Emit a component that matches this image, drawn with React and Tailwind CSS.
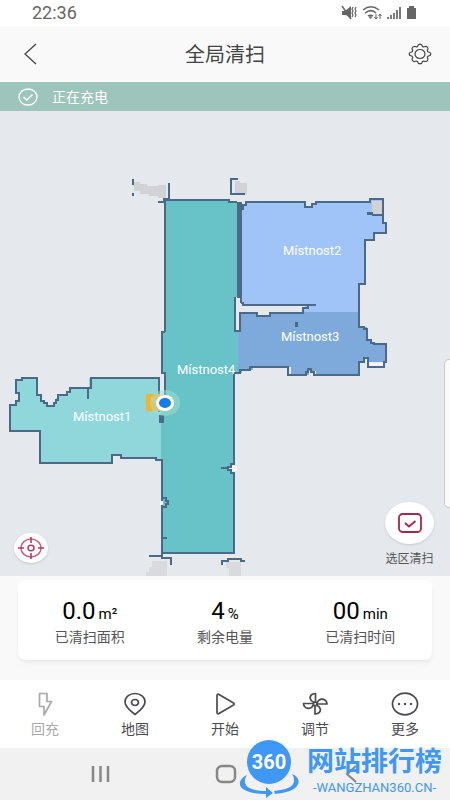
const WALL = "#4a6a87";

function StatusBar() {
  return (
    <div className="flex h-[26px] items-center justify-between bg-white px-8 text-[#666]">
      <span className="text-[18px] leading-[26px]">22:36</span>
      <svg className="h-4 w-[78px]" viewBox="342 5 78 16" fill="none" stroke="#666" aria-hidden="true">
        <g transform="translate(2 0)">
          <path d="M342 11h3l6-5v13l-5-4h-4z" fill="#666" stroke="none" />
          <path d="M342 6l9 13" stroke="#666" strokeWidth="1.5" />
          <path d="M353 7l-1 2 1 2-1 2 1 2-1 2M356 7l-1 2 1 2-1 2 1 2-1 2" strokeWidth="1.2" />
          <path d="M363 10c5-4 11-4 16 0M365 13c4-3 8-3 11 0M368 16c2-1 3-1 5 0" strokeWidth="1.5" />
          <circle cx="370.500" cy="17.500" r="1.200" fill="#666" stroke="none" />
          <path d="M376 14v5m-1.500-2l1.500 2 1.500-2M380 19v-5m-1.500 2l1.500-2 1.500 2" strokeWidth="1" />
          <path d="M388 19v-2M391 19v-4M394 19v-6M397 19v-9M400 19V7" strokeWidth="1.700" />
          <path d="M407 8h2V6h5v2h2v11h-9z" fill="#666" stroke="none" />
        </g>
      </svg>
    </div>
  );
}

function Header() {
  return (
    <header className="flex h-14 items-center justify-between bg-[#f9f9f9] px-[18px]">
      <button type="button" aria-label="返回" className="flex w-6 justify-center">
        <svg className="h-6 w-6" viewBox="0 0 24 24" fill="none" stroke="#444" strokeWidth="1.3">
          <path d="M18 2L7 12l11 10" />
        </svg>
      </button>
      <h1 className="pt-[2px] text-[20px] leading-7 text-[#444]">全局清扫</h1>
      <button type="button" aria-label="设置" className="flex w-6 justify-center">
        <svg className="h-6 w-6" viewBox="0 0 24 24" fill="none" stroke="#444" strokeWidth="1.2" strokeLinejoin="round">
          <path d="M9.500 4.400Q10 2.200 12 2.200T14.500 4.400Q15.300 5 16.300 4.700Q18.300 4 19.500 5.300T19.300 8.300Q19.200 9.300 20.200 10Q22.800 10.400 22.800 12T20.200 14Q19.200 14.700 19.300 15.700Q20.600 17.500 19.500 18.700T16.300 19.300Q15.300 19 14.500 19.600Q14 21.800 12 21.800T9.500 19.600Q8.700 19 7.700 19.300Q5.700 20 4.500 18.700T4.700 15.700Q4.800 14.700 3.800 14Q1.200 13.600 1.200 12T3.800 10Q4.800 9.300 4.700 8.300Q3.400 6.500 4.500 5.300T7.700 4.700Q8.700 5 9.500 4.400Z" />
          <ellipse cx="12" cy="12" rx="5" ry="4.500" />
        </svg>
      </button>
    </header>
  );
}

function Banner() {
  return (
    <div role="status" className="flex h-[29px] items-center gap-[14px] bg-[#9dc5bb] px-[18px] text-white">
      <svg className="h-5 w-5" viewBox="0 0 20 20" fill="none" stroke="currentColor" strokeWidth="1.3" aria-hidden="true">
        <ellipse cx="10" cy="10" rx="9" ry="8" />
        <path d="M5.500 10l3.300 3 5.700-5.500" strokeWidth="1.500" />
      </svg>
      <span className="text-[14px] leading-5">正在充电</span>
    </div>
  );
}

function FloorMap() {
  return (
    <svg className="block w-full" viewBox="0 111 450 465" role="img" aria-label="地图">
      <g fill="#d0d2d5" shapeRendering="crispEdges">
        <path d="M134 182h6v2h7v2h11v-1h8v13h-8v-2h-9v-2h-9v-3h-6z" />
        <path d="M235 181h5v2h7v11h-12z" />
        <path d="M152 561h15v15h-21v-4h3v-5h3z" fill="#d9dadd" />
        <path d="M226 562h15v14h-12v-8h-3z" fill="#d9dadd" />
      </g>

      <g shapeRendering="crispEdges">
        <path fill="#8fd7da" d="M22 378h15v17h3v6l5 2 2 3h5l4-7 2-5h11v-6h20v-10h71v20h3v62h-6v-2h-35v-3h-9v8H40v-32H10v-25h6v-4h3v-8h-3v-13h6z" />
        <path fill="#67c3c8" d="M165 200h64v2h8v95h-2v34h3v42h-4v91l-6 4 6 5v80h-73V395h4v-22h-3v-41h3z" />
        <path fill="#a1c4f8" d="M241 208l5-3v-3h59v5h7v-3h4v-2h54v-2h13v22h2v11h-11v7h-9v44h-6v28h-56v-5l8-2h-68l-2-2z" />
        <path fill="#7eaadb" d="M240 313h17v3h13v-3h33v-1h57v15h7v13h5v4h14v18h-18v-4h-4v4h-4v13h-44v-4h-7v4h-18v-8h-38v3h-11v3h-4v-42h2z" />
        <path fill="#d0d2d5" d="M372 201h10v13h-10z" />
        <path fill="#f4f5f6" d="M369 363h14v3h-14z" />
      </g>

      <g fill="none" stroke={WALL} strokeWidth="2.500" shapeRendering="crispEdges">
        <path d="M133 179v6M133 193v3M158 202h6v-3h5v-16M238 179h-7v15h14" />
        <path d="M165 332V200h64v2h8" />
        <path d="M165 332h-3v41h3v22" />
        <path d="M239 202v96" strokeWidth="5" />
        <path d="M241 303V209h2v-4h3v-3h59v5h7v-3h4v-2h54v-3h13v16h-11" />
        <path d="M383 215V223H386V233H374V240H365V284H359V327H364V329H367V340H371V343H374V344H386V362H384V367H368V358H364V362H359V375H314V372H311V369H308V372H306V375H288V367H250V370H240V373H234V464H231V467H228V470H231V473H234V553H162" />
        <path d="M162 555v3h9v7" />
        <path d="M241 303h2v2h73h-8v3h-5v5h-33v3h-13v-3h-17v18h-5v-34" />
        <path d="M367 213h6M296.500 322v5" strokeWidth="3" />
        <path d="M221 468h8" />
        <path d="M159 412v-34H91v10h-3v11M88 388H70v4h-3v3h-9v5h-2v3h-2v3h-7v-3h-3v-2h-3v-6h-4v-17H22v2h-6v13h3v8h-3v4h-6v26h30v32h72v-8h9v3h35v2h6v95" />
        <path d="M161 415v8" strokeWidth="5" />
        <path d="M163 498h3v3h2v3h-2v3h-3M163 538h4" />
        <path d="M149 556h14M222 565v-4h6v-2h13v2h4" />
      </g>
      <path d="M160 501h3v4h-3zM232 466h5v5h-5z" fill="#f4f6f8" />

      <path d="M146 394h14v4l-5 4 5 5v4h-14z" fill="#f2b42c" />
      <path d="M151 398l6 5" stroke="#ddca79" strokeWidth="2" />
      <ellipse cx="165" cy="403" rx="15" ry="13" fill="#a7e0c9" opacity="0.500" />
      <ellipse cx="165" cy="403" rx="9" ry="8" fill="#fff" />
      <ellipse cx="165" cy="403" rx="6" ry="5" fill="#147de8" />

      <g fill="#fff" fontSize="13" style={{ fontFamily: "Roboto, sans-serif" }}>
        <text x="73" y="421">Místnost1</text>
        <text x="283" y="255">Místnost2</text>
        <text x="281" y="341">Místnost3</text>
        <text x="177" y="374">Místnost4</text>
      </g>
    </svg>
  );
}

function MapPanel() {
  return (
    <main className="relative overflow-hidden bg-[#e5e8ed]">
      <FloorMap />
      <div className="absolute -right-1 top-[248px] h-[149px] w-[10px] rounded-md border border-[#c5c8cc] bg-[#fbfbfc]" />
      <button
        type="button"
        aria-label="定位"
        className="absolute bottom-[13px] left-[14px] flex h-[30px] w-[34px] items-center justify-center rounded-[50%] bg-white shadow"
      >
        <svg className="h-6 w-7" viewBox="0 0 28 24" fill="none" stroke="#b83a5e">
          <ellipse cx="14" cy="12" rx="10" ry="9" strokeWidth="1.500" stroke="#c76682" />
          <ellipse cx="14" cy="12" rx="3" ry="2.700" strokeWidth="1.500" />
          <path d="M14 1v6M14 17v6M1 12h6M21 12h6" strokeWidth="1.600" />
        </svg>
      </button>
      <div className="absolute bottom-[8px] right-4 flex flex-col items-center gap-[6px]">
        <button
          type="button"
          aria-labelledby="zone-clean"
          className="flex h-[42px] w-[49px] items-center justify-center rounded-[50%] bg-white shadow"
        >
          <svg className="h-5 w-6" viewBox="0 0 24 20" fill="none" stroke="#ad2448" strokeWidth="1.800">
            <rect x="1" y="1" width="22" height="18" rx="3.500" />
            <path d="M7 10l4 3.500L17.500 8" />
          </svg>
        </button>
        <span id="zone-clean" className="text-[12px] leading-[18px] text-[#555]">选区清扫</span>
      </div>
    </main>
  );
}

const stats = [
  { value: "0.0", unit: "m²", label: "已清扫面积" },
  { value: "4", unit: "%", label: "剩余电量" },
  { value: "00", unit: "min", label: "已清扫时间" },
];

function Stats() {
  return (
    <section className="bg-[#f9f9f9] px-[18px] pb-5 pt-1">
      <dl className="grid h-20 grid-cols-3 rounded-lg bg-white px-1 pt-[15px] text-center shadow-md shadow-black/5">
        {stats.map((s) => (
          <div key={s.label} className="flex flex-col-reverse justify-end">
            <dt className="text-[14px] leading-5 text-[#555]">{s.label}</dt>
            <dd className="flex items-baseline justify-center gap-[3px] text-black">
              <span className="text-[24px] leading-8">{s.value}</span>
              <span className="text-[15px] leading-5">{s.unit}</span>
            </dd>
          </div>
        ))}
      </dl>
    </section>
  );
}

const tabs = [
  {
    label: "回充",
    off: true,
    icon: <path d="M8.500 1.500h7.500v8h4.500L13 23v-8.500H8.500z" />,
  },
  {
    label: "地图",
    icon: (
      <>
        <path d="M14 22.500C8 18 4 14.500 4 10 4 5 8.500 1.500 14 1.500S24 5 24 10c0 4.500-4 8-10 12.500z" />
        <ellipse cx="14" cy="10.500" rx="3.500" ry="3" />
      </>
    ),
  },
  {
    label: "开始",
    icon: <path d="M6 3.500v17c0 1.300 1 1.600 2 1L22.500 13c.9-.6.900-1.400 0-2L8 2.500c-1-.6-2-.3-2 1z" />,
  },
  {
    label: "调节",
    icon: (
      <>
        <path d="M13 10.500C8.500 8.500 8 4.500 11 2.500c1.500-1 3.500-1 3.500-1v9" />
        <path d="M16 11c2-4.500 6.500-5 9-2 1 1.500 1 3 1 3H16" />
        <path d="M15.500 13c4.500 2 5 6 2 8-1.500 1-3.500 1-3.500 1v-9" />
        <path d="M12.500 13c-2 4-6.500 4.500-9 1.500-1-1.500-1-3-1-3h10" />
        <circle cx="14.200" cy="11.900" r="1.800" />
      </>
    ),
  },
  {
    label: "更多",
    icon: (
      <>
        <ellipse cx="14" cy="12" rx="12.500" ry="10.800" />
        <g fill="currentColor" stroke="none">
          <circle cx="8" cy="12" r="1.200" />
          <circle cx="14" cy="12" r="1.200" />
          <circle cx="20" cy="12" r="1.200" />
        </g>
      </>
    ),
  },
];

function TabBar() {
  return (
    <nav className="grid h-[68px] grid-cols-5 bg-white">
      {tabs.map((t) => (
        <button
          key={t.label}
          type="button"
          disabled={t.off}
          className="flex flex-col items-center gap-[3px] pt-3 text-[#4b4b4f] disabled:text-[#aaa]"
        >
          <svg
            className="h-6 w-7"
            viewBox="0 0 28 24"
            fill="none"
            stroke="currentColor"
            strokeWidth="1.700"
            strokeLinejoin="round"
            aria-hidden="true"
          >
            {t.icon}
          </svg>
          <span className="text-[14px] leading-5">{t.label}</span>
        </button>
      ))}
    </nav>
  );
}

function Watermark() {
  return (
    <div className="absolute bottom-0 right-2 flex items-end gap-2 text-[#3f97f6]">
      <svg className="h-[60px] w-[60px]" viewBox="238 740 60 60" role="img" aria-label="360">
        <path d="M246 775c-6 3-9 8-6 12 4 5 14 7 25 7v4l7-5-7-6v4c-9 0-18-2-20-6-2-3-1-7 1-10z" fill="currentColor" />
        <path d="M291 774c7 3 8 8 5 12-4 5-12 7-22 8l-1-3c9-1 17-3 19-7 2-3 1-7-1-10z" fill="currentColor" />
        <circle cx="268" cy="762" r="22" fill="currentColor" />
        <text
          x="268"
          y="769"
          textAnchor="middle"
          fontSize="20"
          fontWeight="700"
          fill="#fff"
          style={{ fontFamily: "Roboto, sans-serif" }}
        >
          360
        </text>
      </svg>
      <div className="flex flex-col items-center pb-1">
        <span className="text-[27px] font-bold leading-9">网站排行榜</span>
        <span className="text-[13px] leading-4">-WANGZHAN360.CN-</span>
      </div>
    </div>
  );
}

function SystemBar() {
  return (
    <footer className="relative h-[52px] bg-[#f1f1f1]">
      <div className="flex h-full items-center justify-between px-[88px]">
        <button type="button" aria-label="最近">
          <svg className="h-6 w-6" viewBox="0 0 24 24" stroke="#888" strokeWidth="2.500">
            <path d="M5 4v16M12.500 4v16M20 4v16" />
          </svg>
        </button>
        <button type="button" aria-label="主页">
          <svg className="h-6 w-6" viewBox="0 0 24 24" fill="none" stroke="#888" strokeWidth="2.500">
            <rect x="4" y="4" width="18" height="16" rx="5" />
          </svg>
        </button>
        <button type="button" aria-label="后退">
          <svg className="h-6 w-6" viewBox="0 0 24 24" fill="none" stroke="#888" strokeWidth="2.200">
            <path d="M18 4L9 12l9 8" />
          </svg>
        </button>
      </div>
      <Watermark />
    </footer>
  );
}

export default function App() {
  return (
    <div className="w-full bg-white font-[Roboto,'Noto_Sans_CJK_SC',sans-serif]">
      <StatusBar />
      <Header />
      <Banner />
      <MapPanel />
      <Stats />
      <TabBar />
      <SystemBar />
    </div>
  );
}
